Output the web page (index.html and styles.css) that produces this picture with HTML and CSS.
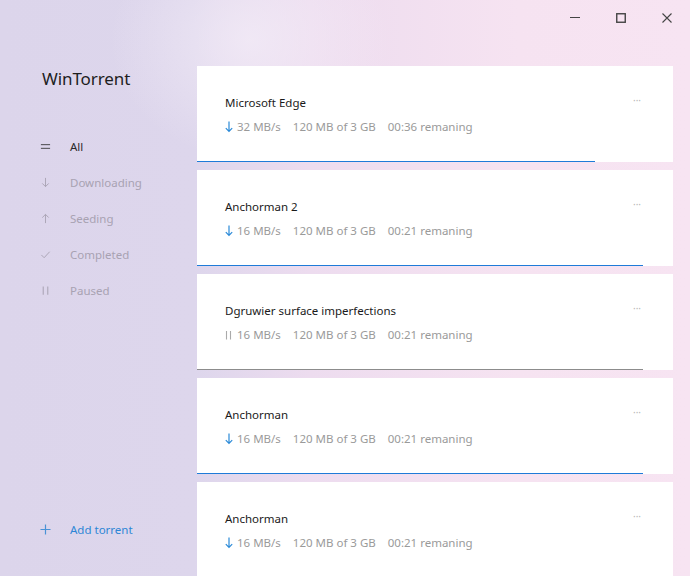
FILE: index.html
```html
<!DOCTYPE html>
<html lang="en">
<head>
<meta charset="utf-8">
<title>WinTorrent</title>
<link rel="stylesheet" href="styles.css">
</head>
<body>
<div class="app">
  <aside class="sidebar">
    <h1 class="brand">WinTorrent</h1>
    <nav class="nav">
      <a class="nav-item active"><svg class="nav-icon" viewBox="0 0 12 12"><path d="M1 4h10M1 8h10" stroke="currentColor" stroke-width="0.9" fill="none"/></svg><span>All</span></a>
      <a class="nav-item"><svg class="nav-icon" viewBox="0 0 12 12"><path d="M6 1v9.5M2.5 7l3.5 3.5L9.5 7" stroke="currentColor" stroke-width="1" fill="none"/></svg><span>Downloading</span></a>
      <a class="nav-item"><svg class="nav-icon" viewBox="0 0 12 12"><path d="M6 11V1.5M2.5 5L6 1.5 9.5 5" stroke="currentColor" stroke-width="1" fill="none"/></svg><span>Seeding</span></a>
      <a class="nav-item"><svg class="nav-icon" viewBox="0 0 12 12"><path d="M1.5 6.5l3 3 6-6.5" stroke="currentColor" stroke-width="1" fill="none"/></svg><span>Completed</span></a>
      <a class="nav-item"><svg class="nav-icon" viewBox="0 0 12 12"><path d="M3.5 1.5v9M8.5 1.5v9" stroke="currentColor" stroke-width="1.1" fill="none"/></svg><span>Paused</span></a>
    </nav>
    <a class="add"><svg class="nav-icon" viewBox="0 0 12 12"><path d="M6 0.5v11M0.5 6h11" stroke="currentColor" stroke-width="1.3" fill="none"/></svg><span>Add torrent</span></a>
  </aside>
  <main class="main">
    <div class="titlebar">
      <button class="ctl"><svg viewBox="0 0 10 10"><path d="M0 4.5h10" stroke="#444" stroke-width="1" fill="none"/></svg></button>
      <button class="ctl"><svg viewBox="0 0 10 10"><rect x="0.75" y="0.75" width="8.5" height="8.5" stroke="#444" stroke-width="1.4" fill="none"/></svg></button>
      <button class="ctl"><svg viewBox="0 0 10 10"><path d="M0.5 0.5l9 9M9.5 0.5l-9 9" stroke="#444" stroke-width="1.1" fill="none"/></svg></button>
    </div>
    <section class="list">
      <article class="card">
        <div class="card-head">
          <div class="info">
            <div class="name">Microsoft Edge</div>
            <div class="meta"><svg class="st" viewBox="0 0 8 12"><path d="M4 0.5v10M0.8 7.2L4 10.5l3.2-3.3" stroke="#2b8ad8" stroke-width="1.2" fill="none"/></svg><span class="speed">32 MB/s</span><span class="size">120 MB of 3 GB</span><span>00:36 remaning</span></div>
          </div>
          <span class="more">···</span>
        </div>
        <div class="bar"><div class="fill" style="width:83.6%"></div></div>
      </article>
      <article class="card">
        <div class="card-head">
          <div class="info">
            <div class="name">Anchorman 2</div>
            <div class="meta"><svg class="st" viewBox="0 0 8 12"><path d="M4 0.5v10M0.8 7.2L4 10.5l3.2-3.3" stroke="#2b8ad8" stroke-width="1.2" fill="none"/></svg><span class="speed">16 MB/s</span><span class="size">120 MB of 3 GB</span><span>00:21 remaning</span></div>
          </div>
          <span class="more">···</span>
        </div>
        <div class="bar"><div class="fill" style="width:93.7%"></div></div>
      </article>
      <article class="card">
        <div class="card-head">
          <div class="info">
            <div class="name">Dgruwier surface imperfections</div>
            <div class="meta"><svg class="st" viewBox="0 0 8 12"><path d="M1.5 2v8.5M5.5 2v8.5" stroke="#aaa" stroke-width="1.1" fill="none"/></svg><span class="speed">16 MB/s</span><span class="size">120 MB of 3 GB</span><span>00:21 remaning</span></div>
          </div>
          <span class="more">···</span>
        </div>
        <div class="bar"><div class="fill paused" style="width:93.7%"></div></div>
      </article>
      <article class="card">
        <div class="card-head">
          <div class="info">
            <div class="name">Anchorman</div>
            <div class="meta"><svg class="st" viewBox="0 0 8 12"><path d="M4 0.5v10M0.8 7.2L4 10.5l3.2-3.3" stroke="#2b8ad8" stroke-width="1.2" fill="none"/></svg><span class="speed">16 MB/s</span><span class="size">120 MB of 3 GB</span><span>00:21 remaning</span></div>
          </div>
          <span class="more">···</span>
        </div>
        <div class="bar"><div class="fill" style="width:93.7%"></div></div>
      </article>
      <article class="card">
        <div class="card-head">
          <div class="info">
            <div class="name">Anchorman</div>
            <div class="meta"><svg class="st" viewBox="0 0 8 12"><path d="M4 0.5v10M0.8 7.2L4 10.5l3.2-3.3" stroke="#2b8ad8" stroke-width="1.2" fill="none"/></svg><span class="speed">16 MB/s</span><span class="size">120 MB of 3 GB</span><span>00:21 remaning</span></div>
          </div>
          <span class="more">···</span>
        </div>
        <div class="bar"><div class="fill" style="width:93.7%"></div></div>
      </article>
    </section>
  </main>
</div>
</body>
</html>
```

FILE: styles.css
```css
* { box-sizing: border-box; }
html, body {
  margin: 0;
  width: 690px;
  height: 576px;
  overflow: hidden;
}
body {
  font-family: "Noto Sans", "Open Sans", sans-serif;
  color: #222;
  background:
    radial-gradient(ellipse 140px 120px at 250px 40px, rgba(245,238,248,0.7), rgba(245,238,248,0) 100%),
    linear-gradient(90deg, #dcd5eb 0%, #ddd6ec 28%, #eddcef 45%, #f6e3f1 75%, #f7e4f2 100%);
}
.app {
  display: grid;
  grid-template-columns: 197px 1fr;
  height: 576px;
}
.sidebar {
  display: flex;
  flex-direction: column;
  padding: 0 0 39px 0;
}
.brand {
  margin: 67px 0 0 42px;
  font-size: 17px;
  font-weight: 400;
  line-height: 24px;
  color: #1e1e1e;
  letter-spacing: -0.1px;
}
.nav {
  display: flex;
  flex-direction: column;
  margin-top: 37px;
}
.nav-item, .add {
  display: flex;
  align-items: center;
  height: 36px;
  padding-left: 40px;
  font-size: 11.5px;
  color: #a8a2b2;
}
.nav-icon {
  width: 11px;
  height: 11px;
  margin-right: 19px;
  flex: none;
}
.nav-item.active { color: #2a2a2a; }
.add {
  margin-top: auto;
  color: #2d86d6;
  height: 20px;
}
.add .nav-icon { color: #4a92d6; }
.main {
  display: flex;
  flex-direction: column;
}
.titlebar {
  display: flex;
  justify-content: flex-end;
  height: 66px;
  align-items: flex-start;
}
.ctl {
  width: 46px;
  height: 36px;
  border: 0;
  padding: 0;
  background: transparent;
  display: flex;
  align-items: center;
  justify-content: center;
}
.ctl svg { width: 10px; height: 10px; }
.list {
  display: flex;
  flex-direction: column;
  gap: 8px;
  width: 476px;
}
.card {
  background: #fff;
  height: 96px;
  flex: none;
  display: flex;
  flex-direction: column;
}
.card-head {
  display: flex;
  justify-content: space-between;
  align-items: flex-start;
  padding: 29px 32px 0 28px;
}
.name {
  font-size: 11.5px;
  line-height: 16px;
  color: #1a1a1a;
}
.meta {
  display: flex;
  align-items: center;
  margin-top: 8px;
  font-size: 11.5px;
  line-height: 16px;
  color: #9a9a9a;
}
.st {
  width: 8px;
  height: 12px;
  margin-right: 4px;
}
.speed { margin-right: 12px; }
.size { margin-right: 12px; }
.more {
  font-size: 10px;
  line-height: 10px;
  color: #b8b8b8;
  margin-top: 0;
  letter-spacing: 0;
}
.bar {
  margin-top: auto;
  height: 1px;
}
.fill {
  height: 1px;
  background: #1f7bd8;
}
.fill.paused { background: #8c8c8c; }
```
